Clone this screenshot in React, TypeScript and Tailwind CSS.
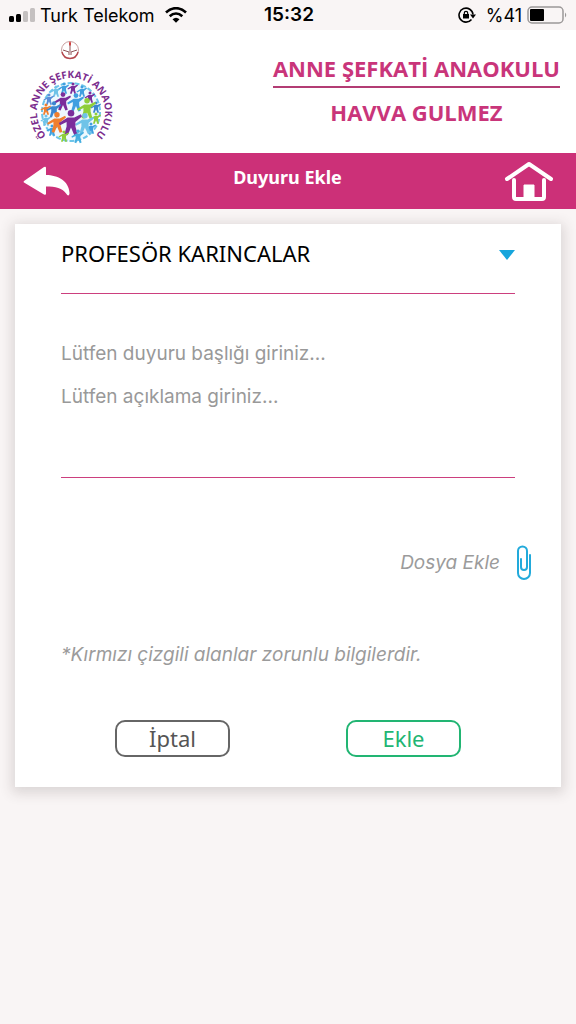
import React from "react";

interface IPerson {
  x: number;
  y: number;
  scale: number;
  color: string;
}

const people: IPerson[] = [
  { x: 35, y: 55, scale: 0.5, color: "#6fc3e8" },
  { x: 43, y: 52, scale: 0.5, color: "#3f9fe0" },
  { x: 52, y: 52, scale: 0.5, color: "#7b2d9b" },
  { x: 61, y: 55, scale: 0.5, color: "#3f9fe0" },
  { x: 69, y: 61, scale: 0.5, color: "#7b2d9b" },
  { x: 28, y: 63, scale: 0.5, color: "#5a8fd8" },
  { x: 25, y: 73, scale: 0.5, color: "#f07f2e" },
  { x: 75, y: 71, scale: 0.5, color: "#3b86d0" },
  { x: 75, y: 82, scale: 0.5, color: "#8fce3a" },
  { x: 25, y: 84, scale: 0.5, color: "#6fc3e8" },
  { x: 31, y: 94, scale: 0.5, color: "#3f9fe0" },
  { x: 70, y: 92, scale: 0.5, color: "#3f9fe0" },
  { x: 42, y: 65, scale: 0.8, color: "#7b2d9b" },
  { x: 55, y: 66, scale: 0.8, color: "#3f9fe0" },
  { x: 66, y: 72, scale: 0.9, color: "#8fce3a" },
  { x: 33, y: 73, scale: 0.7, color: "#3b86d0" },
  { x: 36, y: 86, scale: 0.9, color: "#f07f2e" },
  { x: 64, y: 87, scale: 0.9, color: "#6fc3e8" },
  { x: 50, y: 86, scale: 1.1, color: "#7b2d9b" },
  { x: 43, y: 100, scale: 0.5, color: "#8fce3a" },
  { x: 57, y: 100, scale: 0.6, color: "#45aee0" },
];

const SchoolLogo: React.FC = () => (
  <svg viewBox="0 0 100 108" className="h-[108px] w-[100px]" role="img" aria-label="Özel Anne Şefkati Anaokulu">
    <g fill="none" stroke="#b5484e">
      <circle cx="49" cy="14" r="8.500" stroke="#c9a0a0" />
      <path d="M41 16c1 4 4 6.500 8 6.500s7-2.500 8-6.500" strokeWidth="1.400" />
      <path d="M42 14l6 2v3M56 14l-6 2v3M49 8v8" stroke="#8d5257" />
      <path d="M48 7q1-3 2 0q0 3-1 3t-1-3z" fill="#cf3333" stroke="none" />
    </g>
    <circle cx="50" cy="76" r="29" fill="#eef8fd" stroke="#6cc5ea" strokeWidth="2" strokeDasharray="5 2" />
    {people.map((person, index) => (
      <g
        key={index}
        transform={`translate(${person.x} ${person.y}) scale(${person.scale})`}
        fill={person.color}
      >
        <circle cx="0" cy="-8" r="3" />
        <path d="M-3-4L3-4L9-7L10-5L4 0L4 4L6 11L3 12L0 5L-3 12L-6 11L-4 4L-4 0L-10 3L-11 1z" />
      </g>
    ))}
    <path id="logo-arc" d="M24 98A34 34 0 1 1 76 98" fill="none" />
    <text fill="#7b2d8e" fontSize="10" fontWeight="700" fontFamily="Open Sans, sans-serif">
      <textPath href="#logo-arc" startOffset="50%" textAnchor="middle">
        ÖZEL ANNE ŞEFKATİ ANAOKULU
      </textPath>
    </text>
  </svg>
);

const StatusBar: React.FC = () => (
  <div className="grid h-[30px] grid-cols-3 items-center px-2 font-[Inter,sans-serif] text-[18px] text-black">
    <div className="flex items-center whitespace-nowrap">
      <svg viewBox="0 0 27 16" className="mr-[5px] h-4 w-[27px] shrink-0">
        <rect x="1" y="9" width="5" height="6" rx="1.500" />
        <rect x="8" y="7" width="5" height="8" rx="1.500" />
        <rect x="15" y="4" width="5" height="11" rx="1.500" fill="#c4c0c0" />
        <rect x="22" y="1" width="5" height="14" rx="1.500" fill="#c4c0c0" />
      </svg>
      <span>Turk Telekom</span>
      <svg viewBox="0 0 22 16" className="ml-[10px] h-4 w-[22px] shrink-0" fill="none" stroke="black" strokeWidth="2.600">
        <path d="M1 5.500C7-.3 15-.3 21 5.500" />
        <path d="M4.700 9.200C8.500 5.700 13.500 5.700 17.300 9.200" />
        <path d="M7.500 12.200Q11 9.200 14.500 12.200L11 15.700z" fill="black" stroke="none" />
      </svg>
    </div>
    <div className="pl-0.5 text-center text-[19px] font-semibold">15:32</div>
    <div className="flex items-center justify-end whitespace-nowrap">
      <svg viewBox="0 0 18 16" className="mr-[10px] h-4 w-[18px]" fill="none" stroke="black" strokeWidth="1.600">
        <path d="M13.500 12.500A7 7 0 1 1 15 7.500" />
        <path d="M12 7.500h6l-3 4z" fill="black" stroke="none" />
        <rect x="5" y="7" width="6" height="4.500" fill="black" stroke="none" />
        <path d="M6.300 7.500V6a1.700 1.700 0 0 1 3.400 0v1.500" strokeWidth="1.200" />
      </svg>
      <span>%41</span>
      <svg viewBox="0 0 41 18" className="ml-[5px] h-[18px] w-[41px]">
        <rect x="1" y="1" width="35" height="16" rx="4" fill="none" stroke="#9b9898" strokeWidth="1.500" />
        <rect x="3" y="3" width="14" height="12" rx="1" />
        <path d="M38 6.500q2.500 2.500 0 5z" fill="#9b9898" />
      </svg>
    </div>
  </div>
);

const Header: React.FC = () => (
  <header className="flex h-[123px] items-start justify-between bg-white pr-4 pl-[21px] text-[#c9357a]">
    <div className="pt-[6px]">
      <SchoolLogo />
    </div>
    <div className="pt-[21px] text-center font-['Open_Sans',sans-serif] text-[22px] leading-[35px] font-bold whitespace-nowrap">
      <h1 className="border-b-2 border-[#b33c74]">ANNE ŞEFKATİ ANAOKULU</h1>
      <p className="pt-[7px]">HAVVA GULMEZ</p>
    </div>
  </header>
);

const TitleBar: React.FC = () => (
  <nav className="flex h-14 items-center justify-between bg-[#cc3078] px-[22px] text-white">
    <button type="button" aria-label="Geri" className="w-[49px]">
      <svg viewBox="0 0 49 32" className="h-8 w-[49px]" fill="currentColor">
        <path d="M2 16L22 2q2-1 2 1v7c12 0 23 6 23.500 18c0 3-2 3-3 1c-4-6-11-7.500-20.500-7.500v7q0 2-2 1L2 17.500q-1-.5 0-1.500z" />
      </svg>
    </button>
    <h2 className="pb-2 font-['Noto_Sans',sans-serif] text-[18px] leading-6 font-bold">Duyuru Ekle</h2>
    <button type="button" aria-label="Ana Sayfa" className="w-[50px]">
      <svg
        viewBox="0 0 50 42"
        className="h-[42px] w-[50px]"
        fill="none"
        stroke="currentColor"
        strokeWidth="4"
        strokeLinecap="round"
        strokeLinejoin="round"
      >
        <path d="M3 19L25 4L47 19" />
        <path d="M10 20V37q0 2 2 2H38q2 0 2-2V20" />
        <path d="M20 39V25H30V39z" fill="currentColor" strokeWidth="1" />
      </svg>
    </button>
  </nav>
);

const AnnouncementForm: React.FC = () => (
  <form className="bg-white px-[46px] pb-[30px] shadow-[0_3px_12px_3px_rgba(60,50,50,0.16)]">
    <div className="relative flex h-[69px] items-start">
      <select
        aria-label="Sınıf"
        className="h-[58px] w-full appearance-none bg-transparent font-['Noto_Sans',sans-serif] text-[22px] text-black outline-none"
      >
        <option>PROFESÖR KARINCALAR</option>
      </select>
      <svg viewBox="0 0 16 10" className="pointer-events-none absolute top-[26px] right-0 h-[10px] w-4">
        <path d="M0 0H16L8 10z" fill="#16a5dc" />
      </svg>
    </div>
    <hr className="h-px border-0 bg-[#cc3f7e]" />
    <div className="pt-[43px] font-[Inter,sans-serif] text-[19px] text-[#999999]">
      <input
        type="text"
        aria-label="Duyuru başlığı"
        placeholder="Lütfen duyuru başlığı giriniz..."
        className="block h-8 w-full bg-transparent outline-none placeholder:text-[#999999]"
      />
      <textarea
        aria-label="Açıklama"
        placeholder="Lütfen açıklama giriniz..."
        className="mt-4 block h-[92px] w-full resize-none bg-transparent leading-6 outline-none placeholder:text-[#999999]"
      />
    </div>
    <hr className="h-px border-0 bg-[#cc3f7e]" />
    <div className="-mr-[17px] flex justify-end pt-[67px] font-[Inter,sans-serif] text-[19px] text-[#9b9b9b] italic">
      <button type="button" className="flex items-center gap-4 italic">
        Dosya Ekle
        <svg viewBox="0 0 16 36" className="h-9 w-4" fill="none" stroke="#22aadb" strokeWidth="2" strokeLinecap="round">
          <path d="M11 13V6a4 4 0 0 0-9 0V28a6 6 0 0 0 12 0V10M5 14V22a3 3 0 0 0 6 0V13" />
        </svg>
      </button>
    </div>
    <p className="pt-[60px] font-[Inter,sans-serif] text-[19px] leading-7 text-[#9b9b9b] italic">
      *Kırmızı çizgili alanlar zorunlu bilgilerdir.
    </p>
    <div className="flex justify-between px-[54px] pt-[51px] font-['Noto_Sans',sans-serif] text-[22px] leading-[30px]">
      <button type="button" className="h-[37px] w-[115px] rounded-[10px] border-2 border-[#666666] pb-0.5 text-[#555555]">
        İptal
      </button>
      <button type="submit" className="h-[37px] w-[115px] rounded-[10px] border-2 border-[#22b573] pb-0.5 text-[#22b573]">
        Ekle
      </button>
    </div>
  </form>
);

const App: React.FC = () => {
  return (
    <div className="min-h-screen bg-[#f9f5f5]">
      <StatusBar />
      <Header />
      <TitleBar />
      <main className="px-[15px] pt-[15px]">
        <AnnouncementForm />
      </main>
    </div>
  );
};

export default App;
